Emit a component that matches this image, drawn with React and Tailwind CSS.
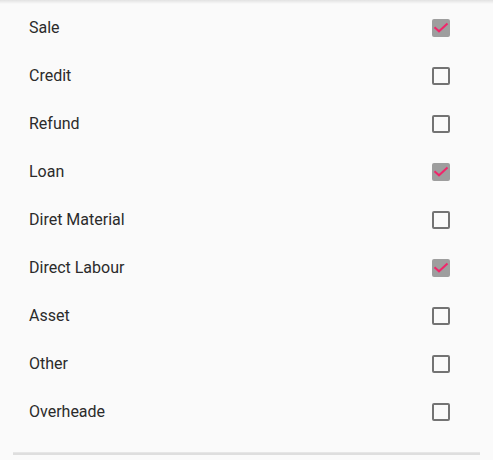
import React from "react";

const items = [
  ["Sale", true],
  ["Credit", false],
  ["Refund", false],
  ["Loan", true],
  ["Diret Material", false],
  ["Direct Labour", true],
  ["Asset", false],
  ["Other", false],
  ["Overheade", false],
];

function Box({ checked }) {
  if (checked) {
    return (
      <div className="w-[18px] h-[18px] rounded-[2px] bg-[#9e9e9e] flex items-center justify-center">
        <svg width="18" height="18" viewBox="0 0 18 18">
          <path d="M2.5 8.3 L7 12.3 L15.5 4.6" fill="none" stroke="#f0266b" strokeWidth="2" />
        </svg>
      </div>
    );
  }
  return <div className="w-[18px] h-[18px] rounded-[2px] border-2 border-[#737373]" />;
}

export default function App() {
  return (
    <div className="w-[493px] h-[460px] bg-[#fafafa] relative overflow-hidden" style={{ fontFamily: "Roboto, sans-serif" }}>
      <div className="absolute top-0 left-0 right-0 h-[4px] bg-gradient-to-b from-[#e2e2e2] to-[#fafafa]" />
      <div className="pt-[4px] flex flex-col">
        {items.map(([label, checked]) => (
          <div key={label} className="h-[48px] flex items-center justify-between pl-[29px] pr-[43px]">
            <span className="text-[16px] leading-[20px] text-[#2b2b2b]">{label}</span>
            <Box checked={checked} />
          </div>
        ))}
      </div>
      <div className="mt-[16px] mx-[13px] h-[3px] bg-[#dedede] border-t border-[#e6e6e6]" />
    </div>
  );
}
